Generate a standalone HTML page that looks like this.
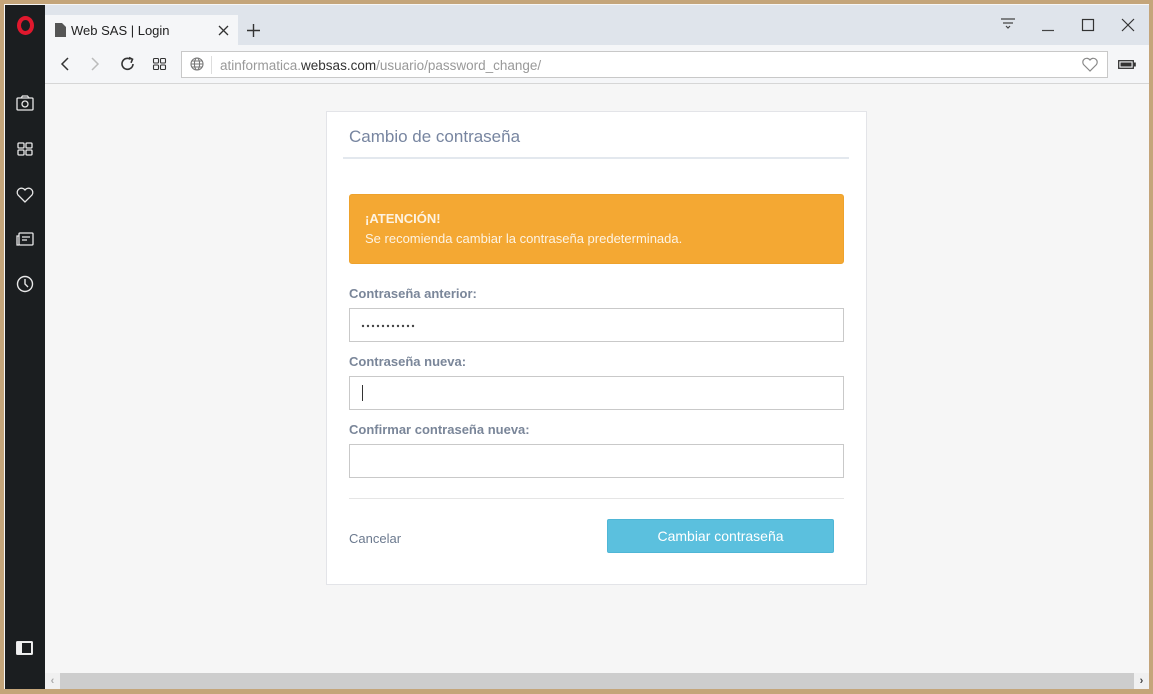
<!DOCTYPE html>
<html><head><meta charset="utf-8"><style>
*{margin:0;padding:0;box-sizing:border-box}
body{width:1153px;height:694px;position:relative;overflow:hidden;background:#c4a57a;font-family:"Liberation Sans",sans-serif}
.abs{position:absolute}
#frame{left:4px;top:4px;width:1145px;height:685px;background:#f6f6f6;overflow:hidden}
#side{left:5px;top:5px;width:40px;height:684px;background:#1b1e20}
#tabbar{left:45px;top:5px;width:1104px;height:40px;background:#dfe4eb}
#tab{left:45px;top:15px;width:193px;height:30px;background:#f5f6f8}
#toolbar{left:45px;top:45px;width:1104px;height:39px;background:#f5f6f8;border-bottom:1px solid #d6d6d6}
#addr{left:181px;top:51px;width:927px;height:27px;background:#fff;border:1px solid #c8c8c8}
.lbl{position:absolute;left:349px;font-size:13px;font-weight:bold;color:#7a8699}
.inp{position:absolute;left:349px;width:495px;height:34px;background:#fff;border:1px solid #c9c9c9}
svg{position:absolute;overflow:visible}
</style></head><body>
<div id="frame" class="abs"></div>
<div id="side" class="abs"></div>
<div id="tabbar" class="abs"></div>
<div id="tab" class="abs"></div>
<div id="toolbar" class="abs"></div>
<div id="addr" class="abs"></div>
<div class="abs" style="left:17px;top:16px;width:17px;height:19px;border-radius:50%;border:4px solid #e0182d;"></div>
<svg style="left:16px;top:95px" width="18" height="16" fill="none" stroke="#e8e8e8" stroke-width="1.3"><rect x="1" y="3" width="16" height="12" rx="1"/><path d="M5 3l1.5-2h5L13 3"/><circle cx="9" cy="9" r="3"/></svg>
<svg style="left:17px;top:142px" width="16" height="15" fill="none" stroke="#e8e8e8" stroke-width="1.3"><rect x="1" y="1" width="6" height="5" rx="1"/><rect x="9" y="1" width="6" height="5" rx="1"/><rect x="1" y="8" width="6" height="5" rx="1"/><rect x="9" y="8" width="6" height="5" rx="1"/></svg>
<svg style="left:16px;top:187px" width="18" height="16" fill="none" stroke="#e8e8e8" stroke-width="1.3"><path d="M9 15L2 8A4 4 0 0 1 9 3A4 4 0 0 1 16 8Z"/></svg>
<svg style="left:16px;top:232px" width="18" height="15" fill="none" stroke="#e8e8e8" stroke-width="1.3"><rect x="3" y="1" width="14" height="12" rx="1"/><path d="M3 4H1v9h2M6 5h8M6 8h5"/></svg>
<svg style="left:16px;top:275px" width="18" height="18" fill="none" stroke="#e8e8e8" stroke-width="1.4"><circle cx="9" cy="9" r="7.5"/><path d="M9 4v5l3 3"/></svg>
<svg style="left:16px;top:641px" width="18" height="14"><rect x="0.5" y="0.5" width="16" height="13" rx="1" fill="#f0f0f0" stroke="#e8e8e8"/><rect x="6" y="2" width="9" height="10" fill="#1b1e20"/></svg>
<svg style="left:55px;top:23px" width="11" height="14"><path d="M0 0h7l4 4v10H0z" fill="#555"/></svg>
<div class="abs" style="left:71px;top:23px;font-size:13px;color:#222">Web SAS | Login</div>
<svg style="left:218px;top:25px" width="11" height="11" stroke="#333" stroke-width="1.3"><path d="M1 1l9 9M10 1l-9 9"/></svg>
<svg style="left:247px;top:24px" width="13" height="13" stroke="#333" stroke-width="1.4"><path d="M6.5 0v13M0 6.5h13"/></svg>
<svg style="left:1001px;top:18px" width="15" height="12" fill="none" stroke="#444" stroke-width="1.2"><path d="M0 1h14M2 5h10M5 8l2 2 2-2"/></svg>
<svg style="left:1042px;top:30px" width="13" height="2" stroke="#444" stroke-width="1.2"><path d="M0 0.5h12"/></svg>
<svg style="left:1082px;top:19px" width="13" height="12" fill="none" stroke="#333" stroke-width="1.2"><rect x="0.5" y="0.5" width="11" height="11"/></svg>
<svg style="left:1122px;top:19px" width="13" height="13" stroke="#333" stroke-width="1.2"><path d="M0 0l12 12M12 0L0 12"/></svg>
<svg style="left:60px;top:57px" width="9" height="14" fill="none" stroke="#333" stroke-width="1.5"><path d="M8 1L2 7l6 6"/></svg>
<svg style="left:91px;top:57px" width="9" height="14" fill="none" stroke="#bbb" stroke-width="1.5"><path d="M1 1l6 6-6 6"/></svg>
<svg style="left:121px;top:57px" width="14" height="14" fill="none" stroke="#333" stroke-width="1.6"><path d="M12 7A5.5 5.5 0 1 1 9.5 2.2"/><path d="M8 0.5l3.5 1.8-1.5 3.5" /></svg>
<svg style="left:153px;top:58px" width="14" height="13" fill="none" stroke="#333" stroke-width="1.1"><rect x="0.5" y="0.5" width="5" height="4.5" rx="1"/><rect x="7.5" y="0.5" width="5" height="4.5" rx="1"/><rect x="0.5" y="7" width="5" height="4.5" rx="1"/><rect x="7.5" y="7" width="5" height="4.5" rx="1"/></svg>
<svg style="left:190px;top:57px" width="15" height="15" fill="none" stroke="#777" stroke-width="1.1"><circle cx="7" cy="7" r="6"/><ellipse cx="7" cy="7" rx="2.6" ry="6"/><path d="M1 7h12M2 4h10M2 10h10"/></svg>
<div class="abs" style="left:211px;top:56px;width:1px;height:18px;background:#ddd"></div>
<div class="abs" style="left:220px;top:58px;font-size:13.5px;color:#999">atinformatica.<span style="color:#333">websas.com</span>/usuario/password_change/</div>
<svg style="left:1082px;top:57px" width="16" height="15" fill="none" stroke="#888" stroke-width="1.2"><path d="M8 14L1.5 7.5A3.7 3.7 0 0 1 8 3A3.7 3.7 0 0 1 14.5 7.5Z"/></svg>
<svg style="left:1118px;top:60px" width="18" height="9"><rect x="0.7" y="0.7" width="14.6" height="7.6" fill="none" stroke="#333" stroke-width="1.3"/><rect x="2.5" y="2.5" width="11" height="4" fill="#333"/><rect x="16" y="2.5" width="1.8" height="4" fill="#333"/></svg>
<div class="abs" style="left:45px;top:673px;width:1104px;height:16px;background:#cdcdcd"></div>
<div class="abs" style="left:45px;top:673px;width:15px;height:16px;background:#f0f0f0;color:#aaa;font-size:11px;text-align:center;line-height:16px;font-weight:bold">‹</div>
<div class="abs" style="left:1134px;top:673px;width:15px;height:16px;background:#f0f0f0;color:#444;font-size:11px;text-align:center;line-height:16px;font-weight:bold">›</div>
<div class="abs" style="left:326px;top:111px;width:541px;height:474px;background:#fff;border:1px solid #e3e4e8"></div>
<div class="abs" style="left:349px;top:127px;font-size:17px;color:#7785a0">Cambio de contraseña</div>
<div class="abs" style="left:343px;top:157px;width:506px;height:2px;background:#e3e8ee"></div>
<div class="abs" style="left:349px;top:194px;width:495px;height:70px;background:#f4a833;border:1px solid #eea22c;border-radius:3px"></div>
<div class="abs" style="left:365px;top:211px;font-size:13px;font-weight:bold;color:#fdf3e3">¡ATENCIÓN!</div>
<div class="abs" style="left:365px;top:231px;font-size:13px;color:#fdf3e3">Se recomienda cambiar la contraseña predeterminada.</div>
<div class="lbl" style="top:286px">Contraseña anterior:</div>
<div class="inp" style="top:308px"></div>
<svg style="left:362px;top:325px" width="55" height="4" fill="#444"><circle cx="1" cy="1" r="1.2"/><circle cx="6" cy="1" r="1.2"/><circle cx="11" cy="1" r="1.2"/><circle cx="16" cy="1" r="1.2"/><circle cx="21" cy="1" r="1.2"/><circle cx="26" cy="1" r="1.2"/><circle cx="31" cy="1" r="1.2"/><circle cx="36" cy="1" r="1.2"/><circle cx="41" cy="1" r="1.2"/><circle cx="46" cy="1" r="1.2"/><circle cx="51" cy="1" r="1.2"/></svg>
<div class="lbl" style="top:354px">Contraseña nueva:</div>
<div class="inp" style="top:376px"></div>
<div class="abs" style="left:362px;top:385px;width:1px;height:16px;background:#333"></div>
<div class="lbl" style="top:422px">Confirmar contraseña nueva:</div>
<div class="inp" style="top:444px"></div>
<div class="abs" style="left:349px;top:498px;width:495px;height:1px;background:#e5e5e5"></div>
<div class="abs" style="left:349px;top:531px;font-size:13px;color:#6c7a8f">Cancelar</div>
<div class="abs" style="left:607px;top:519px;width:227px;height:34px;background:#5bc0de;border:1px solid #4fb6d6;border-radius:2px;color:#fff;font-size:14px;text-align:center;line-height:32px">Cambiar contraseña</div>
</body></html>
